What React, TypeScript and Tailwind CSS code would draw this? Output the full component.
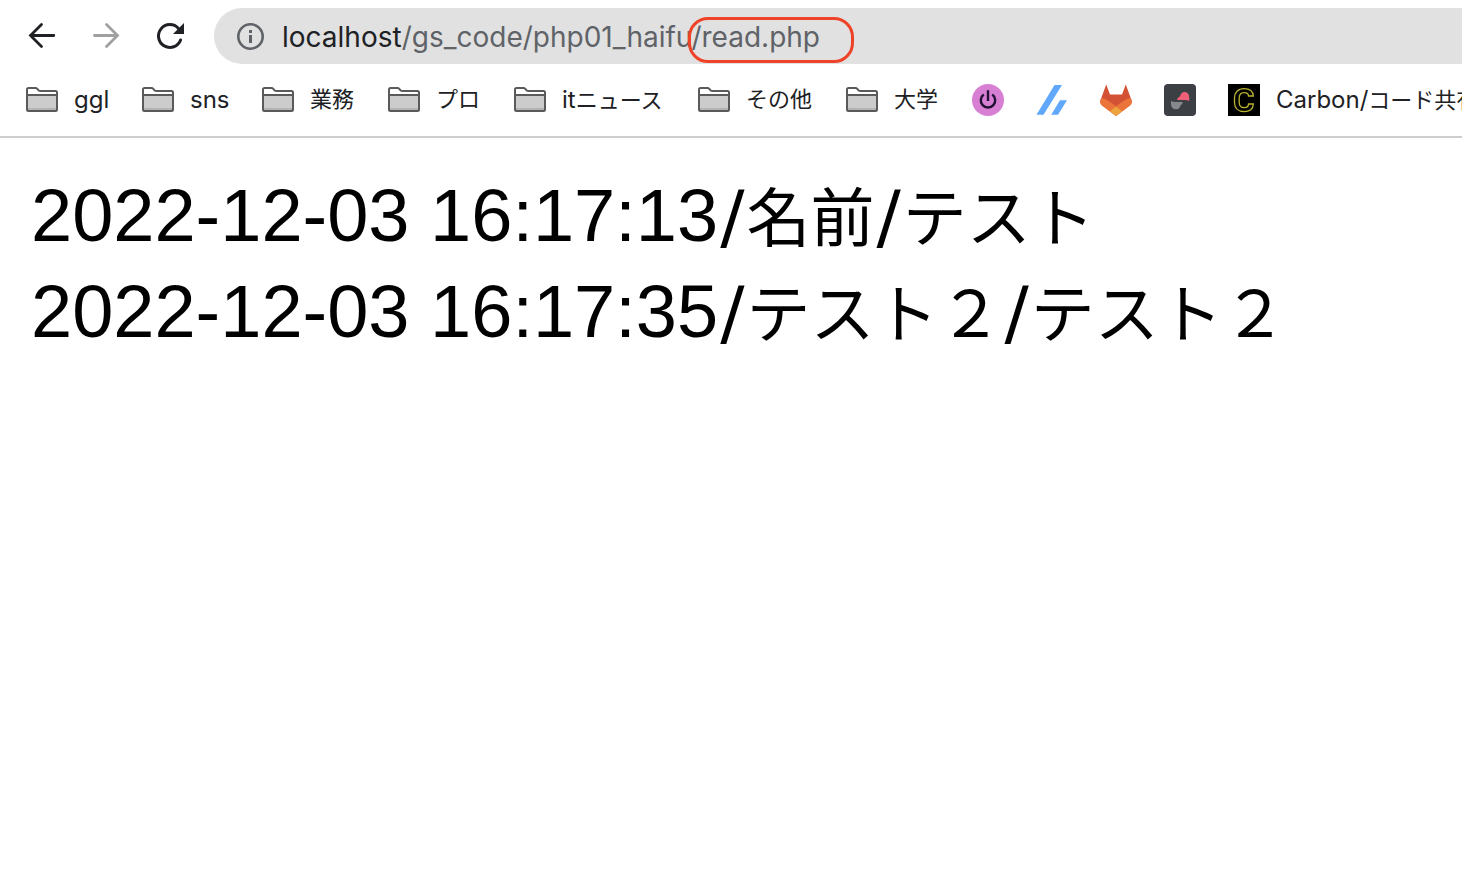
import React from "react";

function BackIcon() {
  return (
    <svg className="size-8" viewBox="0 0 32 32" fill="none" stroke="currentColor" strokeWidth="2.8" strokeLinecap="round" aria-hidden="true">
      <path d="M27.800 15.500H4.500M15.500 4.500L4.500 15.500l11 11" />
    </svg>
  );
}

function ForwardIcon() {
  return (
    <svg className="size-8" viewBox="0 0 32 32" fill="none" stroke="currentColor" strokeWidth="2.8" strokeLinecap="round" aria-hidden="true">
      <path d="M4.500 15.500h23M16.500 4.500l11 11-11 11" />
    </svg>
  );
}

function ReloadIcon() {
  return (
    <svg className="size-8" viewBox="0 0 32 32" fill="none" aria-hidden="true">
      <path d="M26.600 20A11.400 11.400 0 1 1 24.400 8.400" stroke="currentColor" strokeWidth="3" strokeLinecap="round" />
      <path d="M30 3v11H19z" fill="currentColor" />
    </svg>
  );
}

function InfoIcon() {
  return (
    <svg className="size-7 shrink-0 text-[#5f6368]" viewBox="0 0 28 28" fill="none" aria-hidden="true">
      <circle cx="13.500" cy="14.500" r="12.200" stroke="currentColor" strokeWidth="2.600" />
      <path d="M12 8h3v3h-3zM12 13h3v8h-3z" fill="currentColor" />
    </svg>
  );
}

function FolderIcon() {
  return (
    <svg className="h-8 w-8 shrink-0" viewBox="0 0 32 32" aria-hidden="true">
      <path d="M1 8V5.500Q1 4 2.500 4H9.500Q10.500 4 11.300 4.900L12.500 6.200Q13.300 7 14.500 7H29.500Q31 7 31 8.500V11H1z" fill="#fff" />
      <path d="M1 11h30v14.500Q31 27 29.500 27H2.500Q1 27 1 25.500z" fill="#ccc" />
      <path d="M2 24h28v2H2z" fill="#b3b3b3" />
      <path d="M1 11h30M1 25.500V5.500Q1 4 2.500 4H9.500Q10.500 4 11.300 4.900L12.500 6.200Q13.300 7 14.500 7H29.500Q31 7 31 8.500V25.500Q31 27 29.500 27H2.500Q1 27 1 25.500z" fill="none" stroke="#5a5a5a" strokeWidth="2" />
    </svg>
  );
}

function PowerIcon() {
  return (
    <svg className="size-8" viewBox="0 0 32 32" fill="none" aria-hidden="true">
      <circle cx="16" cy="16" r="16" fill="#d67fd3" />
      <path d="M11.800 10.500A7.200 7.200 0 1 0 20.200 10.500M16 6.200V17" stroke="#241234" strokeWidth="2.400" />
    </svg>
  );
}

function SlashesIcon() {
  return (
    <svg className="size-8" viewBox="0 0 32 32" fill="#60a8fb" aria-hidden="true">
      <path d="M18.500 1h7.500L7.500 30.700H0.500zM24 16.300h7L22 30.700h-6.800z" />
    </svg>
  );
}

function FoxIcon() {
  return (
    <svg className="size-8" viewBox="0 0 32 32" aria-hidden="true">
      <path d="M6.200 0.500L10 10.500H22L25.800 0.500 32 17.500 30.500 21 16 32 1.500 21 0 17.500z" fill="#d35235" />
      <path d="M1.300 14Q6 14 16 22.500 26 14 30.700 14L32 17.500Q32 20 30 21.500L16 32 2 21.500Q0 20 0 17.500z" fill="#ea7439" />
      <path d="M16 22.500L22 27.300 16 32 10 27.300z" fill="#eda43e" />
    </svg>
  );
}

function PillIcon() {
  return (
    <svg className="size-8" viewBox="0 0 32 32" aria-hidden="true">
      <rect width="32" height="32" rx="4" fill="#3c3f43" />
      <path d="M13.200 16C13.200 14 14.500 13 16 12.500 16.500 9.800 18.200 8 20.500 8 23.300 8 25.200 10 25.200 13V17Q23.500 16 21 16z" fill="#ef6078" />
      <path d="M7 17Q9 18 11.500 18H18.800Q18.500 20.500 16.500 21.500C16 23.800 14.500 25.300 12.200 25.300 9 25.300 7 23 7 20z" fill="#88898d" />
    </svg>
  );
}

function CarbonIcon() {
  return (
    <svg className="size-8 shrink-0" viewBox="0 0 32 32" fill="none" aria-hidden="true">
      <rect width="32" height="32" fill="#000" />
      <path d="M25.300 12C25.300 7 21.500 4.600 16.300 4.600 10 4.600 6.500 8.500 6.500 14V18.500C6.500 24 10 27.600 16.300 27.600 21.500 27.600 25.300 25 25.300 20H20.500C20.500 22.500 19 23.700 16.300 23.700 13 23.700 11.200 21.800 11.200 18.500V14C11.200 10.500 13 8.600 16.300 8.600 19 8.600 20.500 9.700 20.500 12z" stroke="#bbb42f" strokeWidth="1.300" />
    </svg>
  );
}

const folders = [
  { latin: "ggl", kana: "", width: "w-[84px]" },
  { latin: "sns", kana: "", width: "w-[88px]" },
  { latin: "", kana: "業務", width: "w-[94px]" },
  { latin: "", kana: "プロ", width: "w-[94px]" },
  { latin: "it", kana: "ニュース", width: "w-[152px]" },
  { latin: "", kana: "その他", width: "w-[116px]" },
  { latin: "", kana: "大学", width: "w-[94px]" },
];

const sites = [
  { name: "Power", Icon: PowerIcon },
  { name: "Slashes", Icon: SlashesIcon },
  { name: "Fox", Icon: FoxIcon },
  { name: "Pill", Icon: PillIcon },
];

const entries = [
  { time: "2022-12-03 16:17:13", fields: ["名前", "テスト"] },
  { time: "2022-12-03 16:17:35", fields: ["テスト２", "テスト２"] },
];

function BookmarkLabel({ latin, kana }: { latin: string; kana: string }) {
  return (
    <span className="flex items-baseline">
      {latin && <span className="text-[24px]">{latin}</span>}
      {kana && <span className="text-[22px] leading-[30px]">{kana}</span>}
    </span>
  );
}

export default function App() {
  return (
    <div className="min-h-screen overflow-hidden bg-white text-[#202124]">
      <header className="border-b-2 border-[#cecece] font-['Inter','Noto_Sans_CJK_JP',sans-serif]">
        <div className="flex h-[72px] items-center pl-[26px]">
          <nav className="flex w-[188px] shrink-0 gap-8" aria-label="History">
            <button type="button" aria-label="Back"><BackIcon /></button>
            <button type="button" aria-label="Forward" className="text-[#a0a0a0]"><ForwardIcon /></button>
            <button type="button" aria-label="Reload"><ReloadIcon /></button>
          </nav>
          <div className="flex h-14 flex-1 items-center gap-[17px] rounded-l-full bg-[#e1e1e1] pl-[23px]">
            <InfoIcon />
            <div
              role="textbox"
              aria-label="Address"
              contentEditable
              suppressContentEditableWarning
              spellCheck={false}
              className="pt-0.5 font-['Inter',sans-serif] text-[28px] leading-8 whitespace-nowrap text-[#5f6368] outline-none"
            >
              <span className="text-[#202124]">localhost</span>/gs_code/php01_haifu
              <span className="relative">
                /read.php
                <span className="pointer-events-none absolute -top-[3px] -left-[3px] h-[46px] w-[166px] rounded-[20px] border-3 border-[#ee4328]" />
              </span>
            </div>
          </div>
        </div>
        <nav className="flex h-16 items-start gap-8 pt-3 pl-[26px] leading-8 whitespace-nowrap" aria-label="Bookmarks">
          {folders.map(({ latin, kana, width }) => (
            <button key={latin + kana} type="button" className={`flex shrink-0 gap-4 ${width}`}>
              <FolderIcon />
              <BookmarkLabel latin={latin} kana={kana} />
            </button>
          ))}
          {sites.map(({ name, Icon }) => (
            <a key={name} href="#" aria-label={name} className="shrink-0"><Icon /></a>
          ))}
          <a href="#" className="flex shrink-0 gap-4">
            <CarbonIcon />
            <BookmarkLabel latin="Carbon/" kana="コード共有" />
          </a>
        </nav>
      </header>
      <main className="px-[31px] pt-[30px] font-['Liberation_Sans','Noto_Sans_CJK_JP',sans-serif] text-[64px] leading-[96px] whitespace-nowrap text-black">
        {entries.map(({ time, fields }) => (
          <p key={time} className="flex h-24 items-baseline">
            <span className="text-[74px]">{time}</span>
            {fields.map((field, index) => (
              <React.Fragment key={index}>
                <span className="px-0.5 font-['DejaVu_Sans',sans-serif] text-[72px]">/</span>
                <span>{field}</span>
              </React.Fragment>
            ))}
          </p>
        ))}
      </main>
    </div>
  );
}
